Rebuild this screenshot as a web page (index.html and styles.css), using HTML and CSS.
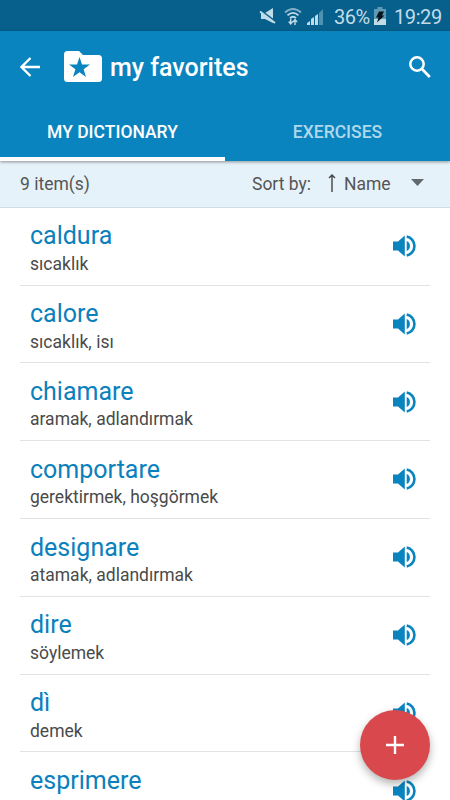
FILE: index.html
```html
<!DOCTYPE html>
<html lang="en">
<head>
<meta charset="utf-8">
<title>my favorites</title>
<link rel="stylesheet" href="styles.css">
</head>
<body>
<svg width="0" height="0" class="symbols">
  <symbol id="speaker" viewBox="0 0 24 24">
    <path d="M0 7.500h5l6.800-6v21L5 16.500H0z"/>
    <path d="M13.700 7a5.500 5.500 0 0 1 0 10z"/>
    <path d="M13.700 2.500a9.700 9.700 0 0 1 0 19" fill="none" stroke="currentColor" stroke-width="2.600"/>
  </symbol>
</svg>
<div class="screen">
  <div class="status">
    <svg class="mute" width="17" height="17" viewBox="0 0 17 17"><path d="M2 5h4l8-5v15L6 11H2z" fill="#c1dce9"/><path d="M1 2l16 12" stroke="#07608b" stroke-width="2"/><path d="M1 3.500l15 11.500" stroke="#c1dce9" stroke-width="1.800"/></svg>
    <svg class="wifi" width="18" height="19" viewBox="0 0 18 19"><g fill="none" stroke="#c1dce9" stroke-width="1.800"><path d="M1 5.500q8-7 16 0" opacity=".65"/><path d="M3.500 8.400q5.500-5 11 0M6 11q3-2.600 6 0"/></g><path d="M6.700 11.500v5M4.700 14.500l2 2.500 2-2.500M11 18v-5M9 15l2-2.500 2 2.500" fill="none" stroke="#c1dce9" stroke-width="1.400"/></svg>
    <svg class="signal" width="17" height="17" viewBox="0 0 17 17"><path d="M0 17v-2l3-2v4zM4 17v-6l3-2v8zM8 17V8l3-2v11z" fill="#c1dce9"/><path d="M12 17V5l4-4v16z" fill="#4f91b0"/></svg>
    <span class="percent">36%</span>
    <svg class="battery" width="12" height="18" viewBox="0 0 12 18"><path d="M3.500 0h5v2H12v16H0V2h3.500z" fill="#5e9ab7"/><path d="M0 12h12v6H0z" fill="#c1dce9"/><path d="M5 4.500h5L8 8.500h2.500L3 15.500l1.500-5H2z" fill="#06151c"/></svg>
    <span class="clock">19:29</span>
  </div>
  <header class="header">
    <div class="toolbar">
      <svg class="back" width="20" height="20" viewBox="0 0 20 20"><path d="M20 10H1.500M10.500 1l-9 9 9 9" fill="none" stroke="#fff" stroke-width="2.300"/></svg>
      <svg class="folder" width="38" height="31" viewBox="0 0 38 31"><path d="M3.500 0H15l4 4h15.500Q38 4 38 7.500v20Q38 31 34.500 31h-31Q0 31 0 27.500v-24Q0 0 3.500 0z" fill="#fff"/><path d="M15.500 6l2.500 7.500h8l-6.400 4.800 2.400 7.700-6.500-4.700L9 26l2.400-7.700L5 13.500h8z" fill="#0a84bf"/></svg>
      <h1 class="title">my favorites</h1>
      <svg class="search" width="22" height="22" viewBox="0 0 22 22"><circle cx="8" cy="8" r="6.700" fill="none" stroke="#fff" stroke-width="2.500"/><path d="M13 13l7.800 8" stroke="#fff" stroke-width="2.700"/></svg>
    </div>
    <nav class="tabs">
      <div class="tab active"><span>MY DICTIONARY</span></div>
      <div class="tab"><span>EXERCISES</span></div>
    </nav>
  </header>
  <div class="sortbar">
    <span class="count">9 item(s)</span>
    <span class="sortby">Sort by:</span>
    <svg class="up" width="8" height="18" viewBox="0 0 8 18"><path d="M4 18V1M1 4l3-3 3 3" fill="none" stroke="#444" stroke-width="1.400"/></svg>
    <span class="name">Name</span>
    <svg class="caret" width="13" height="7" viewBox="0 0 13 7"><path d="M0 0h13L6.500 7z" fill="#606a6e"/></svg>
  </div>
  <main class="list">
    <div class="row"><div><div class="word">caldura</div><div class="meaning">sıcaklık</div></div><svg class="speaker"><use href="#speaker"/></svg></div>
    <div class="row"><div><div class="word">calore</div><div class="meaning">sıcaklık, isı</div></div><svg class="speaker"><use href="#speaker"/></svg></div>
    <div class="row"><div><div class="word">chiamare</div><div class="meaning">aramak, adlandırmak</div></div><svg class="speaker"><use href="#speaker"/></svg></div>
    <div class="row"><div><div class="word">comportare</div><div class="meaning">gerektirmek, hoşgörmek</div></div><svg class="speaker"><use href="#speaker"/></svg></div>
    <div class="row"><div><div class="word">designare</div><div class="meaning">atamak, adlandırmak</div></div><svg class="speaker"><use href="#speaker"/></svg></div>
    <div class="row"><div><div class="word">dire</div><div class="meaning">söylemek</div></div><svg class="speaker"><use href="#speaker"/></svg></div>
    <div class="row"><div><div class="word">dì</div><div class="meaning">demek</div></div><svg class="speaker"><use href="#speaker"/></svg></div>
    <div class="row"><div><div class="word">esprimere</div></div><svg class="speaker"><use href="#speaker"/></svg></div>
  </main>
  <div class="fab"><svg width="18" height="18" viewBox="0 0 18 18"><path d="M9 0v18M0 9h18" stroke="#fff" stroke-width="2.400"/></svg></div>
</div>
</body>
</html>
```
FILE: styles.css
```css
* { box-sizing: border-box; }
body { margin: 0; font-family: Roboto, "Noto Sans", sans-serif; background: #fff; }
svg { display: block; flex: none; }
.symbols { position: absolute; }
.screen { position: relative; width: 450px; height: 800px; overflow: hidden; display: flex; flex-direction: column; }
.status { flex: none; height: 31px; background: #07608b; display: flex; align-items: center; padding: 2px 0 0 259px; color: #c1dce9; font-size: 20px; white-space: nowrap; }
.wifi { margin-left: 8px; }
.signal { margin-left: 5px; }
.percent { width: 37px; margin-left: 10px; letter-spacing: -0.5px; }
.battery { margin-left: 3px; margin-top: -2px; }
.clock { margin-left: 8px; letter-spacing: -0.4px; }
.header { flex: none; height: 130px; background: #0a84bf; color: #fff; box-shadow: 0 1px 3px rgba(0,0,0,.4); position: relative; }
.toolbar { height: 72px; display: flex; align-items: center; padding: 0 19px 0 20px; }
.back { margin-top: -1px; }
.folder { margin-left: 24px; margin-top: -2px; }
.title { margin: 1px 0 0 8px; font-size: 25px; font-weight: 500; line-height: 32px; white-space: nowrap; }
.search { margin-left: auto; margin-top: -1px; }
.tabs { display: flex; height: 58px; }
.tab { flex: 1; display: flex; justify-content: center; padding-top: 17px; font-size: 17.500px; line-height: 24px; font-weight: 500; color: #b0d7ea; white-space: nowrap; }
.tab.active { color: #fff; border-bottom: 4px solid #fff; }
.sortbar { flex: none; height: 46.800px; background: #e6f2f9; border-bottom: 1px solid #d4dde2; display: flex; align-items: center; padding: 1px 26px 0 20px; font-size: 17.500px; color: #555; white-space: nowrap; }
.sortby { margin-left: auto; width: 58px; }
.up { margin-left: 18px; margin-top: -2px; }
.name { width: 46px; margin-left: 8px; }
.caret { margin-left: 21px; margin-top: -3px; }
.list { padding: 0 20px; }
.row { height: 77.800px; border-bottom: 1px solid #e3e3e3; padding: 12.600px 13px 0 10px; display: flex; justify-content: space-between; white-space: nowrap; }
.word { font-size: 25px; line-height: 31.500px; color: #0a80bc; }
.meaning { font-size: 17.500px; line-height: 24.500px; color: #4a4a4a; }
.speaker { width: 24px; height: 24px; margin-top: 13.600px; color: #0a84bf; fill: currentColor; }
.fab { position: absolute; left: 360px; top: 710px; width: 70px; height: 70px; border-radius: 50%; background: #d9484d; display: flex; align-items: center; justify-content: center; box-shadow: 0 4px 9px rgba(0,0,0,.3); }
```
